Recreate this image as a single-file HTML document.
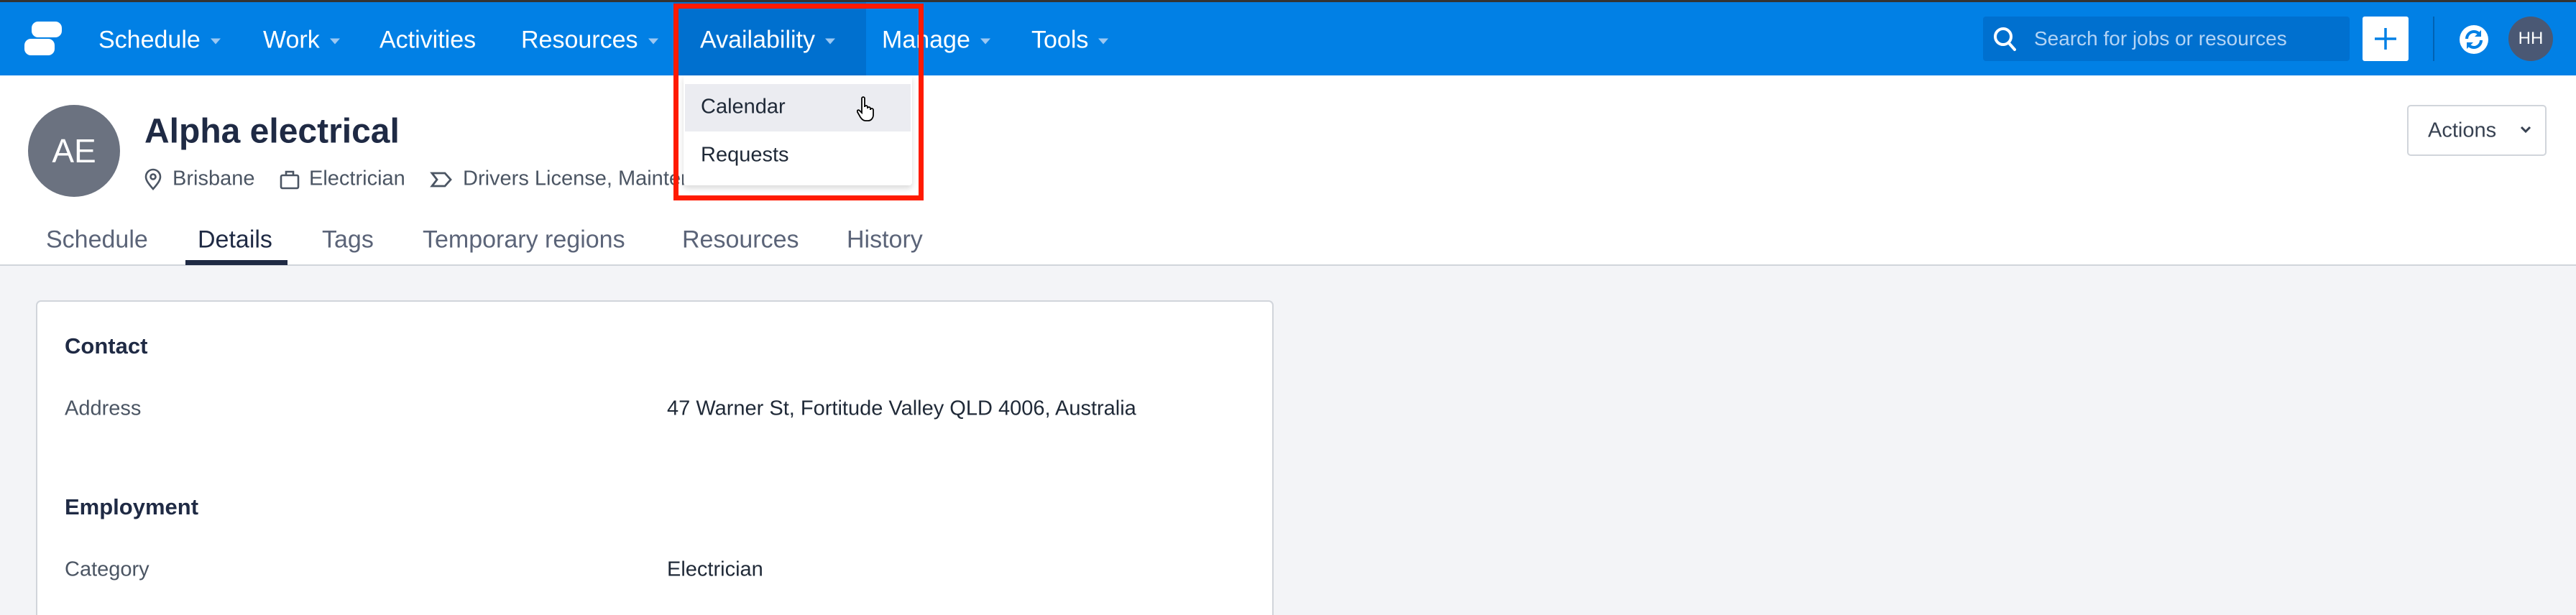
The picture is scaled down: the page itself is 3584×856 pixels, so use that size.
<!DOCTYPE html>
<html style="overflow:hidden;height:856px"><head><meta charset="utf-8"><style>
*{margin:0;padding:0;box-sizing:border-box}
body{width:3584px;height:856px;overflow:hidden;font-family:"Liberation Sans",sans-serif;background:#fff;position:relative}
.a{position:absolute;white-space:nowrap}
.nav{position:absolute;left:0;top:0;width:3584px;height:105px;background:#0180e5;border-top:3px solid #333}
.ni{position:absolute;top:53px;transform:translateY(-50%);color:#fff;font-size:34px;font-weight:500}
.car{display:inline-block;width:0;height:0;border-left:7px solid transparent;border-right:7px solid transparent;border-top:8px solid #9cc8f2;margin-left:14px;vertical-align:middle}
.tab{position:absolute;top:334px;transform:translateY(-50%);font-size:34px;color:#5b6478}
.lbl{font-size:29px;color:#4b5563}
.val{font-size:29px;color:#1f2937}
.h{font-size:31px;font-weight:bold;color:#1f2a44}
</style></head><body>
<div class="nav">
  <svg class="a" style="left:30px;top:27px" width="60" height="50" viewBox="0 0 60 50"><rect x="14" y="0" width="42" height="22" rx="9" fill="#fff"/><rect x="4" y="24" width="42" height="23" rx="9" fill="#fff"/></svg>
  <div class="a" style="left:937px;top:0;width:268px;height:102px;background:#0070cf"></div>
  <div class="ni" style="left:137px">Schedule<span class="car"></span></div>
  <div class="ni" style="left:366px">Work<span class="car"></span></div>
  <div class="ni" style="left:528px">Activities</div>
  <div class="ni" style="left:725px">Resources<span class="car"></span></div>
  <div class="ni" style="left:974px">Availability<span class="car"></span></div>
  <div class="ni" style="left:1227px">Manage<span class="car"></span></div>
  <div class="ni" style="left:1435px">Tools<span class="car"></span></div>
  <div class="a" style="left:2759px;top:20px;width:510px;height:62px;background:#0070cf;border-radius:4px"></div>
  <svg class="a" style="left:2772px;top:33px" width="36" height="38" viewBox="0 0 36 38"><circle cx="15" cy="15" r="11" fill="none" stroke="#fff" stroke-width="4"/><line x1="23" y1="24" x2="31" y2="33" stroke="#fff" stroke-width="4" stroke-linecap="round"/></svg>
  <div class="a" style="left:2830px;top:51px;transform:translateY(-50%);font-size:28px;color:#b3d4f5">Search for jobs or resources</div>
  <div class="a" style="left:3287px;top:20px;width:64px;height:62px;background:#fff;border-radius:3px"></div>
  <svg class="a" style="left:3301px;top:33px" width="36" height="36"><line x1="18" y1="3" x2="18" y2="33" stroke="#0180e5" stroke-width="3.5"/><line x1="3" y1="18" x2="33" y2="18" stroke="#0180e5" stroke-width="3.5"/></svg>
  <div class="a" style="left:3385px;top:20px;width:2px;height:62px;background:#0162b3"></div>
  <svg class="a" style="left:3421px;top:31px" width="42" height="42" viewBox="0 0 42 42"><circle cx="21" cy="21" r="20" fill="#fff"/><path d="M11 20a10 10 0 0 1 18-6M31 22a10 10 0 0 1-18 6" fill="none" stroke="#0180e5" stroke-width="4"/><path d="M31 8v9h-9z M11 34v-9h9z" fill="#0180e5"/></svg>
  <div class="a" style="left:3490px;top:20px;width:62px;height:62px;border-radius:50%;background:#4a5874;color:#fff;font-size:24px;line-height:62px;text-align:center">HH</div>
</div>
<div class="a" style="left:39px;top:146px;width:128px;height:128px;border-radius:50%;background:#6b7280;color:#fff;font-size:46px;line-height:128px;text-align:center">AE</div>
<div class="a" style="left:201px;top:183px;transform:translateY(-50%);font-size:48px;font-weight:bold;color:#1f2a44">Alpha electrical</div>
<svg class="a" style="left:200px;top:234px" width="26" height="32" viewBox="0 0 26 32"><path d="M13 29C5 20 3 16 3 12a10 10 0 0 1 20 0c0 4-2 8-10 17z" fill="none" stroke="#4b5563" stroke-width="2.6"/><circle cx="13" cy="12" r="3.5" fill="none" stroke="#4b5563" stroke-width="2.6"/></svg>
<div class="a lbl" style="left:240px;top:249px;transform:translateY(-50%)">Brisbane</div>
<svg class="a" style="left:388px;top:235px" width="30" height="30" viewBox="0 0 30 30"><rect x="3" y="9" width="24" height="18" rx="2" fill="none" stroke="#4b5563" stroke-width="2.6"/><path d="M10 9V4h10v5" fill="none" stroke="#4b5563" stroke-width="2.6"/></svg>
<div class="a lbl" style="left:430px;top:249px;transform:translateY(-50%)">Electrician</div>
<svg class="a" style="left:598px;top:238px" width="32" height="24" viewBox="0 0 32 24"><path d="M3 3h18l8 9-8 9H3l7-9z" fill="none" stroke="#4b5563" stroke-width="2.8"/></svg>
<div class="a lbl" style="left:644px;top:249px;transform:translateY(-50%)">Drivers License, Maintenance</div>
<div class="a" style="left:3349px;top:146px;width:194px;height:71px;border:2px solid #d1d5db;border-radius:5px"></div>
<div class="a" style="left:3378px;top:182px;transform:translateY(-50%);font-size:29px;color:#374151">Actions</div>
<svg class="a" style="left:3506px;top:174px" width="16" height="14"><path d="M2 3l6 6 6-6" fill="none" stroke="#374151" stroke-width="3"/></svg>
<div class="tab" style="left:64px">Schedule</div>
<div class="tab" style="left:275px;color:#1f2a44">Details</div>
<div class="tab" style="left:448px">Tags</div>
<div class="tab" style="left:588px">Temporary regions</div>
<div class="tab" style="left:949px">Resources</div>
<div class="tab" style="left:1178px">History</div>
<div class="a" style="left:0;top:368px;width:3584px;height:488px;background:#f3f4f7;border-top:2px solid #d1d5db"></div>
<div class="a" style="left:258px;top:362px;width:142px;height:7px;background:#1f2a44"></div>
<div class="a" style="left:50px;top:418px;width:1722px;height:438px;background:#fff;border:2px solid #d1d5db;border-bottom:none;border-radius:7px 7px 0 0"></div>
<div class="a h" style="left:90px;top:482px;transform:translateY(-50%)">Contact</div>
<div class="a lbl" style="left:90px;top:569px;transform:translateY(-50%)">Address</div>
<div class="a val" style="left:928px;top:569px;transform:translateY(-50%)">47 Warner St, Fortitude Valley QLD 4006, Australia</div>
<div class="a h" style="left:90px;top:706px;transform:translateY(-50%)">Employment</div>
<div class="a lbl" style="left:90px;top:793px;transform:translateY(-50%)">Category</div>
<div class="a val" style="left:928px;top:793px;transform:translateY(-50%)">Electrician</div>
<div class="a" style="left:951px;top:105px;width:318px;height:153px;background:#fff;box-shadow:0 4px 8px rgba(0,0,0,.15);border-radius:0 0 4px 4px"></div>
<div class="a" style="left:953px;top:117px;width:314px;height:66px;background:#ebecf1"></div>
<div class="a val" style="left:975px;top:149px;transform:translateY(-50%)">Calendar</div>
<div class="a val" style="left:975px;top:216px;transform:translateY(-50%)">Requests</div>
<svg class="a" style="left:1192px;top:134px" width="26" height="36" viewBox="0 0 26 36"><path d="M7 3a2 2 0 0 1 4 0v12a2 2 0 0 1 4 0v2a2 2 0 0 1 4 0v2a2 2 0 0 1 4 0v7c0 4-3 8-7 8h-4c-3 0-5-2-7-5l-4-7c-1-2 1-4 3-2l3 3z" fill="#fff" stroke="#000" stroke-width="1.8"/></svg>
<div class="a" style="left:937px;top:5px;width:348px;height:274px;border:7px solid #ff1a00"></div>
</body></html>
